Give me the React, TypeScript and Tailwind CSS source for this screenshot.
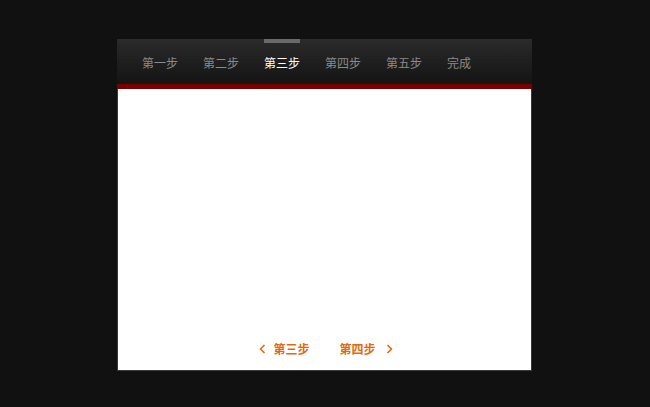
import React from "react"

const steps = ["第一步", "第二步", "第三步", "第四步", "第五步", "完成"]
const active = 2

function Chevron({ dir }: { dir: "left" | "right" }) {
  return (
    <svg width="7" height="10" viewBox="0 0 7 10" className="shrink-0">
      <path
        d={dir === "left" ? "M5.5 1 L1.5 5 L5.5 9" : "M1.5 1 L5.5 5 L1.5 9"}
        fill="none"
        stroke="#e06a10"
        strokeWidth="1.6"
      />
    </svg>
  )
}

export default function App() {
  return (
    <div
      className="w-[650px] h-[407px] bg-[#111111] pt-[39px] pl-[117px]"
      style={{ fontFamily: '"Noto Sans CJK SC", "Liberation Sans", sans-serif' }}
    >
      <div className="w-[415px] flex flex-col">
        {/* step bar */}
        <div className="h-[44px] bg-gradient-to-b from-[#2b2b2b] to-[#141414] flex pl-[25px] gap-[25px]">
          {steps.map((s, i) => (
            <div key={s} className="relative flex items-center pt-[3px]">
              {i === active && <div className="absolute top-0 left-0 right-0 h-[4px] bg-[#6a6a6a]"></div>}
              <span className={`text-[12px] leading-none ${i === active ? "text-white" : "text-[#8a8a8a]"}`}>{s}</span>
            </div>
          ))}
        </div>
        <div className="h-[6px] bg-[#7a0000] border-t border-[#4a0000]"></div>

        {/* content */}
        <div className="h-[282px] bg-white border border-t-0 border-[#3a3a3a] flex flex-col justify-end items-center pb-[15px]">
          <div className="flex items-center text-[12px] font-bold text-[#e06a10] leading-none pl-[3px]">
            <Chevron dir="left" />
            <span className="ml-[7px]">第三步</span>
            <span className="ml-[30px]">第四步</span>
            <span className="ml-[10px]">
              <Chevron dir="right" />
            </span>
          </div>
        </div>
      </div>
    </div>
  )
}
